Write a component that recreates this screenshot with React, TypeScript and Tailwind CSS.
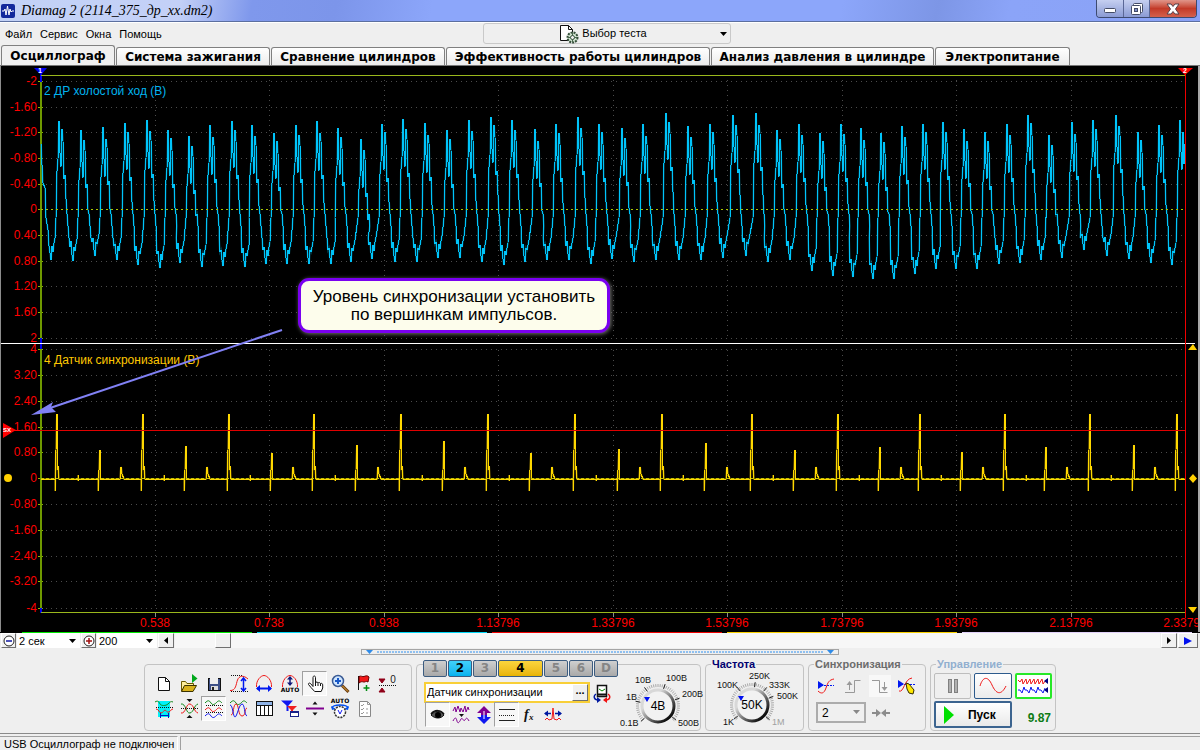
import React, { useState } from 'react';

const menuItems = ['Файл', 'Сервис', 'Окна', 'Помощь'];

const tabs = [
  { label: 'Осциллограф', width: 'w-[114px]' },
  { label: 'Система зажигания', width: 'w-[154px]' },
  { label: 'Сравнение цилиндров', width: 'w-[174px]' },
  { label: 'Эффективность работы цилиндров', width: 'w-[264px]' },
  { label: 'Анализ давления в цилиндре', width: 'w-[223px]' },
  { label: 'Электропитание', width: 'w-[135px]' },
];

const channels = [
  { label: '1', style: 'w-6 bg-linear-to-b from-[#cfcfcf] to-[#a9a9a9] text-[#858585]' },
  { label: '2', style: 'w-6 bg-linear-to-b from-[#3fd0fb] to-[#00b2ee] text-black' },
  { label: '3', style: 'w-6 bg-linear-to-b from-[#cfcfcf] to-[#a9a9a9] text-[#858585]' },
  { label: '4', style: 'w-[45px] bg-linear-to-b from-[#fbd53c] to-[#e9b400] text-black' },
  { label: '5', style: 'w-6 bg-linear-to-b from-[#cfcfcf] to-[#a9a9a9] text-[#858585]' },
  { label: '6', style: 'w-6 bg-linear-to-b from-[#cfcfcf] to-[#a9a9a9] text-[#858585]' },
  { label: 'D', style: 'w-6 bg-linear-to-b from-[#cfcfcf] to-[#a9a9a9] text-[#858585]' },
];

/* ---------- scope data ---------- */

const gridX = [155, 269, 384, 498, 613, 727, 842, 956, 1071, 1185];
const timeLabels = ['0.538', '0.738', '0.938', '1.13796', '1.33796', '1.53796', '1.73796', '1.93796', '2.13796', '2.33796'];

const topScale: [number, string][] = [
  [81, '-2'], [107, '-1.60'], [132, '-1.20'], [158, '-0.80'], [184, '-0.40'], [209, '0'],
  [235, '0.40'], [261, '0.80'], [286, '1.20'], [312, '1.60'], [338, '2'],
];
const bottomScale: [number, string][] = [
  [349, '4'], [375, '3.20'], [401, '2.40'], [427, '1.60'], [452, '0.80'], [478, '0'],
  [504, '-0.80'], [530, '-1.60'], [556, '-2.40'], [581, '-3.20'], [608, '-4'],
];

// trough x, trough y, peak x, peak y
const pulses = [
  [51, 260, 59, 121], [73, 261, 81, 130], [95, 256, 103, 127], [117, 260, 125, 123], [138, 265, 147, 120],
  [160, 268, 168, 130], [180, 263, 189, 136], [202, 267, 210, 125], [223, 266, 232, 121], [245, 267, 252, 125],
  [266, 264, 274, 133], [287, 264, 296, 125], [309, 264, 317, 121], [331, 264, 338, 128], [351, 262, 361, 139],
  [372, 259, 382, 124], [395, 262, 403, 119], [417, 262, 425, 123], [438, 258, 447, 130], [460, 258, 469, 120],
  [482, 262, 491, 117], [504, 265, 512, 120], [525, 262, 535, 129], [547, 260, 556, 124], [569, 260, 578, 117],
  [591, 264, 599, 124], [612, 259, 622, 128], [634, 262, 643, 124], [656, 260, 666, 113], [679, 260, 688, 126],
  [701, 260, 710, 124], [723, 258, 733, 115], [746, 256, 756, 113], [768, 262, 777, 130], [790, 260, 799, 124],
  [812, 271, 820, 133], [833, 276, 841, 124], [853, 277, 861, 128], [873, 279, 881, 133], [894, 279, 902, 126],
  [915, 274, 923, 124], [936, 269, 943, 122], [956, 269, 964, 129], [977, 269, 985, 132], [999, 264, 1007, 124],
  [1020, 263, 1028, 115], [1041, 260, 1049, 135], [1062, 258, 1072, 122], [1084, 250, 1093, 120],
  [1107, 256, 1116, 115], [1129, 259, 1138, 132], [1151, 263, 1159, 125], [1172, 265, 1180, 120],
];

const tallSpikes = [57, 143, 229, 314, 401, 488, 575, 662, 752, 838, 920, 1005, 1090, 1177];
const midSpikes = [
  [100, 450], [186, 446], [272, 453], [357, 445], [444, 441], [531, 453], [619, 449],
  [706, 443], [795, 450], [880, 447], [962, 452], [1046, 447], [1134, 445],
];

function buildKnockPath() {
  let d = 'M41 144L42 165L43 183L45 188L46 218L48 230L49 246';
  pulses.forEach(([tx, ty, px, py], i) => {
    const j = (i * 7) % 5;
    const next = pulses[i + 1];
    d += `L${tx} ${ty}L${tx + 1} ${ty - 14}L${tx + 2} ${ty - 8 - j}L${tx + 3} ${ty - 17}L${tx + 4} ${ty - 22}L${px - 3} 218`;
    d += `L${px - 2} ${py + 50}L${px - 1} ${py + 38}L${px} ${py}L${px + 1} ${py + 32}L${px + 2} ${py + 46 + j}L${px + 3} ${py + 8 + j}`;
    if (!next) {
      d += `L${px + 4} ${py + 44}L${px + 5} ${py + 24}`;
      return;
    }
    d += `L${px + 4} ${py + 20}L${px + 5} ${py + 58}L${px + 6} ${py + 54}L${px + 7} ${py + 78 + j}L${px + 8} 214L${px + 9} 226`;
    d += `L${next[0] - 4} 238L${next[0] - 3} ${next[1] - 14}L${next[0] - 2} ${next[1] - 20 + j}L${next[0] - 1} ${next[1] - 6}`;
  });
  return d;
}

function buildSyncPath() {
  const spikes = [
    ...tallSpikes.map(x => ({ x, d: `L${x - 2} 479V491L${x - 1} 450L${x} 414V470L${x + 1} 466L${x + 2} 479` })),
    ...tallSpikes.map(x => ({ x: x + 21, d: `L${x + 21} 479V475V481V479` })),
    ...midSpikes.map(([x, y]) => ({ x, d: `L${x - 2} 479V491L${x - 1} 470L${x} ${y}V479` })),
    ...midSpikes.map(([x]) => ({ x: x + 21, d: `L${x + 20} 479L${x + 21} 467L${x + 22} 474L${x + 24} 479` })),
  ].sort((a, b) => a.x - b.x);
  return 'M41 479' + spikes.filter(s => s.x < 1184).map(s => s.d).join('') + 'L1185 479';
}

const knockPath = buildKnockPath();
const syncPath = buildSyncPath();

function Scope() {
  return (
    <svg viewBox="0 66 1200 566" className="block w-full h-auto font-['Liberation_Sans',Arial,sans-serif]">
      <rect x="0" y="66" width="1200" height="566" fill="#000" />
      <g shapeRendering="crispEdges">
        {[...topScale, ...bottomScale].map(([y, label]) => (
          <g key={`${y}${label}`}>
            <path d={`M46 ${y + 0.5}H1182`} stroke="#4b4b4b" strokeDasharray="1 4" />
            <path d={`M38 ${y + 0.5}h5`} stroke="#8db600" />
          </g>
        ))}
        {gridX.slice(0, 9).map(x => (
          <g key={x}>
            <path d={`M${x + 0.5} 80V338M${x + 0.5} 350V608`} stroke="#4b4b4b" strokeDasharray="1 4" />
            <path d={`M${x + 0.5} 613v4`} stroke="#8a8a8a" />
          </g>
        ))}
        <path d="M41 75V612" stroke="#6f9a00" strokeWidth="2" />
        <path d="M41 70V82M41 338V349M41 608V613" stroke="#0000f0" strokeWidth="2" />
        <path d="M41 75.5H1186M41 612.5H1186" stroke="#9ab81c" />
      </g>
      <path d={knockPath} fill="none" stroke="#006f8c" strokeWidth="2" strokeOpacity="0.5" />
      <path d={knockPath} fill="none" stroke="#00c4fa" strokeWidth="1" shapeRendering="crispEdges" />
      <path d="M41 209.5H1185" stroke="#a9c500" strokeDasharray="2 3" shapeRendering="crispEdges" />
      <path d={syncPath} fill="none" stroke="#a88a00" strokeWidth="2" strokeOpacity="0.6" />
      <path d={syncPath} fill="none" stroke="#ffd800" strokeWidth="1" shapeRendering="crispEdges" />
      <path d="M41 478.5H1185" stroke="#c4c400" strokeDasharray="3 2" shapeRendering="crispEdges" />
      <path d="M14 430.5H1185" stroke="#e00000" shapeRendering="crispEdges" />
      <path d="M0 343.5H1195" stroke="#fff" shapeRendering="crispEdges" />
      <rect x="1185" y="70" width="1" height="548" fill="#f00000" />

      <g fill="#f00" fontSize="12" textAnchor="end">
        {topScale.map(([y, label]) => <text key={label} x="37" y={y + 4}>{label}</text>)}
        {bottomScale.map(([y, label]) => <text key={label} x="37" y={y + 4}>{label}</text>)}
      </g>
      <g fill="#f00" fontSize="12" textAnchor="middle">
        {timeLabels.map((label, i) => <text key={label} x={gridX[i]} y="627">{label}</text>)}
      </g>
      <text x="44" y="95" fill="#00b4f0" fontSize="12">2 ДР холостой ход (В)</text>
      <text x="44" y="364" fill="#ffc800" fontSize="12">4 Датчик синхронизации (В)</text>

      <path d="M34 68H47L41 75Z" fill="#0000f0" />
      <text x="40" y="73" fill="#fff" fontSize="7" fontWeight="bold" textAnchor="middle">1</text>
      <path d="M1178 68H1193L1185 75Z" fill="#f00" />
      <text x="1185" y="73" fill="#fff" fontSize="7" fontWeight="bold" textAnchor="middle">2</text>
      <path d="M3 423L16 430L3 438Z" fill="#f00" />
      <text x="3" y="432" fill="#fff" fontSize="6" fontWeight="bold">SX</text>
      <circle cx="8" cy="478" r="4" fill="#ffd000" />
      <path d="M1188 350L1193 344L1197 350ZM1188 607H1197L1193 613ZM1193 474L1197 478.5L1193 483L1189 478.5Z" fill="#ffd000" />
      <path d="M282 330L50 408" stroke="#8181f5" strokeWidth="2" />
      <path d="M31 415L53 402L51 407L56 412Z" fill="#8181f5" />

      <rect x="0" y="66" width="1" height="566" fill="#8c8c8c" />
      <rect x="1198" y="66" width="2" height="566" fill="#a8a8a8" />
    </svg>
  );
}

/* ---------- toolbar icons, all drawn on a 24px grid ---------- */

const Icon: React.FC<{ children: React.ReactNode; crisp?: boolean }> = ({ children, crisp }) => (
  <svg viewBox="0 0 24 24" className="w-6 h-6 overflow-visible" fill="none" shapeRendering={crisp ? 'crispEdges' : 'auto'} aria-hidden="true">
    {children}
  </svg>
);

const AutoText = ({ y }: { y: number }) => (
  <text x="12" y={y} fontSize="6" fontWeight="bold" textAnchor="middle" fill="#000" fontFamily="DejaVu Sans, sans-serif">AUTO</text>
);

const icons = {
  newFile: <Icon><path d="M6.5 5.5h7l4 4v9h-11z" fill="#fff" stroke="#111" /><path d="M13.5 5.5v4h4" stroke="#111" /></Icon>,
  open: (
    <Icon>
      <path d="M4.5 19V9.5h4l1.5 2h6.5v3" fill="#ffef9c" stroke="#6b5a00" />
      <path d="M4.5 19.5l3-6h12l-3.5 6z" fill="#d8b21c" stroke="#3c3200" />
      <path d="M15 2l5.5 4.5L15 11z" fill="#00a81c" />
    </Icon>
  ),
  save: (
    <Icon crisp>
      <rect x="6" y="6" width="12" height="12" fill="#3d4f86" stroke="#111" />
      <rect x="8" y="6" width="8" height="6" fill="#eee" />
      <rect x="9" y="14" width="7" height="4" fill="#ddd" />
      <rect x="10" y="15" width="2" height="3" fill="#222" />
    </Icon>
  ),
  fitAmplitude: (
    <Icon>
      <path d="M4 3.5H15M4 19.5H21" stroke="#111" strokeDasharray="1 1" />
      <path d="M3 18.5C9 19 9 12 10.5 8S16 2.5 21 7" stroke="#f01818" />
      <path d="M16.5 7V18M14 9l2.5-3L19 9M14 16l2.5 3L19 16" stroke="#0018f0" strokeWidth="1.5" />
    </Icon>
  ),
  fitPeriod: (
    <Icon>
      <path d="M4.5 15C4 8 9 3.5 12 3.5S20 8 19.5 15" stroke="#f01818" />
      <path d="M5 16.5H19" stroke="#0018f0" strokeWidth="2" />
      <path d="M4 16.5l4-3.5v7zM20 16.5l-4-3.5v7z" fill="#0018f0" />
    </Icon>
  ),
  fitAuto: (
    <Icon>
      <path d="M4.5 15C4 8 9 3.5 12 3.5S20 8 19.5 15" stroke="#f01818" />
      <path d="M12 6V12" stroke="#101878" strokeWidth="1.5" />
      <path d="M12 4l3 3.5H9zM12 14l3-3.5H9z" fill="#101878" />
      <AutoText y={20} />
    </Icon>
  ),
  hand: (
    <Icon>
      <path d="M10 14.5V5.5c0-2 2.5-2 2.5 0V11c.3-1.500 2.5-1.300 2.5.3.3-1.300 2.3-1 2.5.6.5-1 2.200-.6 2.200.9v3.2l-1.500 3.5h-6.500L8 15.5 5.500 12.5c-.6-1.200 1-2 2-1z" fill="#fff" stroke="#111" />
      <path d="M12.5 11v3M15 11.5V14M17.5 12V14" stroke="#111" />
    </Icon>
  ),
  zoomIn: (
    <Icon>
      <path d="M14 13.5L20.5 20" stroke="#6b3c10" strokeWidth="3" />
      <path d="M14.5 14L20 19.5" stroke="#e8b040" />
      <circle cx="10" cy="9" r="5.5" fill="#cfe6ff" stroke="#3a5a94" strokeWidth="1.5" />
      <path d="M10 6V12M7 9H13" stroke="#1858c8" strokeWidth="2" />
    </Icon>
  ),
  flag: (
    <Icon>
      <path d="M5.5 4V18" stroke="#111" />
      <path d="M6 4.5c2-1 3.5.5 5 0s3-1.500 5 .5l-1 5c-2-1.500-3 .5-4.500 0S8 9.500 6 11z" fill="#f01818" stroke="#600" />
      <path d="M13.5 13V19M10.5 16H16.5" stroke="#008c10" strokeWidth="1.5" />
    </Icon>
  ),
  zeroLevel: (
    <Icon>
      <path d="M1 7h6l-3 4zM1 20h6l-3-4z" fill="#900018" stroke="#900018" />
      <path d="M1 13.5H18" stroke="#111" strokeDasharray="1 1" />
      <text x="15" y="11" fontSize="10" textAnchor="middle" fill="#222">0</text>
    </Icon>
  ),
  cursors: (
    <Icon>
      <rect x="6" y="4" width="12" height="16" fill="#00f0f8" />
      <path d="M3 5c3-2 4 0 5 2s6 2 8 0 3-3 5-2" stroke="#108818" />
      <path d="M4 10.5H21" stroke="#111" strokeDasharray="1 1" />
      <path d="M4 12c3 0 3 4 5 4s3-3 4-3 2 3 4 2 2-3 4-3" stroke="#f01818" />
      <path d="M8.5 16v5M16.5 16v5M9 18.5H16" stroke="#0018c0" />
    </Icon>
  ),
  mirror: (
    <Icon>
      <path d="M4 7c5-1 5 10 9 9s4-8 8-9" stroke="#108818" />
      <path d="M4 16c5 1 5-10 9-9s4 8 8 9" stroke="#f01818" />
      <path d="M4 11.5H21" stroke="#111" strokeDasharray="1 1" />
      <path d="M9.5 2h6l-3 3zM9.5 21h6l-3-3z" fill="#111" />
    </Icon>
  ),
  waves: (
    <Icon>
      <path d="M3 6c3-3 4-3 6 0s4 1 6-1 3-1 5 1" stroke="#108818" />
      <path d="M4 8.5H21M4 15.5H21" stroke="#111" strokeDasharray="1 1" />
      <path d="M3 13c3-3 4-3 6 0s4 1 6-1 3-1 5 1" stroke="#f01818" />
      <path d="M3 19c3-3 4-3 6 0s4 1 6-1 3-1 5 1" stroke="#1018f0" />
    </Icon>
  ),
  overlay: (
    <Icon>
      <path d="M3 6c3-3 4-3 6 0s4 1 6-1 3-1 5 1" stroke="#108818" />
      <path d="M4 18C7 18 6 7 9 7s2 12 6 12 2-7 5-8" stroke="#f01818" />
      <path d="M3 8c3 0 3 12 5 12s4-13 7-13 2 11 5 12" stroke="#1018f0" />
    </Icon>
  ),
  table: (
    <Icon crisp>
      <rect x="4" y="4" width="16" height="14" fill="#fff" stroke="#111" />
      <rect x="5" y="5" width="15" height="3" fill="#8fb4e8" />
      <path d="M4 8.5H20M8.5 8V18M12.5 8V18M16.5 8V18" stroke="#111" />
    </Icon>
  ),
  filter: (
    <Icon>
      <path d="M3 3.5h12l-4.500 5V14h-2V8.500z" fill="#1018f0" />
      <path d="M9 9h10l-4 4v5h-2v-5z" fill="#f02020" />
      <rect x="12.5" y="14.5" width="8" height="5" fill="#fff" stroke="#182088" />
      <path d="M13 15.5H20" stroke="#182088" />
    </Icon>
  ),
  split: (
    <Icon>
      <path d="M3 11.5H21" stroke="#800090" strokeWidth="2" />
      <path d="M9.5 7.5h5l-2.500-3zM9.5 15.5h5l-2.500 3z" fill="#111" />
    </Icon>
  ),
  autoKnob: (
    <Icon>
      <AutoText y={6} />
      <path d="M4 11C5 7 19 7 20 11" stroke="#0050f0" strokeWidth="1.5" />
      <path d="M3 9l1 4 4-1zM21 9l-1 4-4-1z" fill="#0050f0" />
      <circle cx="12" cy="15" r="5.5" fill="#fff" stroke="#333" strokeWidth="1.5" strokeDasharray="2 1" />
      <path d="M10 13l2 4 2-4" stroke="#1018f0" />
    </Icon>
  ),
  checklist: (
    <Icon>
      <path d="M6.5 4.5h8l3 3v12h-11z" fill="#fff" stroke="#888" />
      <path d="M14.5 4.5v3h3M8 8l1 1 2-2M8 12l1 1 2-2M8 16l1 1 2-2M13 12h2M13 16h2" stroke="#999" />
    </Icon>
  ),
};

const toolButtons = [
  { label: 'Новый', icon: icons.newFile },
  { label: 'Открыть', icon: icons.open },
  { label: 'Сохранить', icon: icons.save },
  { label: 'Амплитуда', icon: icons.fitAmplitude },
  { label: 'Период', icon: icons.fitPeriod },
  { label: 'Авто', icon: icons.fitAuto },
  { label: 'Перемещение', icon: icons.hand, pressed: true },
  { label: 'Масштаб', icon: icons.zoomIn },
  { label: 'Метка', icon: icons.flag },
  { label: 'Нулевой уровень', icon: icons.zeroLevel },
  { label: 'Курсоры', icon: icons.cursors },
  { label: 'Инверсия', icon: icons.mirror },
  { label: 'Раздельно', icon: icons.waves, pressed: true },
  { label: 'Наложение', icon: icons.overlay },
  { label: 'Таблица', icon: icons.table },
  { label: 'Фильтр', icon: icons.filter },
  { label: 'Разделитель', icon: icons.split },
  { label: 'Автонастройка', icon: icons.autoKnob },
  { label: 'Отчёт', icon: icons.checklist },
];

const channelTools = [
  {
    label: 'Видимость', pressed: true,
    icon: (
      <Icon>
        <path d="M5 12c4-5 10-5 13 0-3 4-9 4-13 0z" fill="#555" stroke="#111" />
        <circle cx="12" cy="12" r="3" fill="#000" />
        <path d="M5 11C9 6 15 7 18 11" stroke="#111" strokeWidth="1.5" />
      </Icon>
    ),
  },
  {
    label: 'Сглаживание',
    icon: (
      <Icon>
        <path d="M4 8l2-4 1 5 2-6 2 6 1-4 2 4 2-6 1 6 2-5 1 3" stroke="#800090" />
        <path d="M10 11h5l-2.500 3z" fill="#111" />
        <path d="M4 18c2-4 3-4 4 0s3 0 4-2 3 3 4 1 2-3 4 1" stroke="#800090" />
      </Icon>
    ),
  },
  {
    label: 'Инвертировать',
    icon: (
      <Icon>
        <path d="M12 3l7 7h-4v2H9v-2H5z" fill="#800090" />
        <path d="M12 21l7-7h-4v-2H9v2H5z" fill="#1018f0" />
        <path d="M12 8v8" stroke="#fff" />
      </Icon>
    ),
  },
  {
    label: 'Уровни', pressed: true,
    icon: <Icon><path d="M4 6.5H20M4 17.5H20" stroke="#222" /><path d="M4 12.5H20" stroke="#222" strokeDasharray="1 1" /></Icon>,
  },
  {
    label: 'Функция',
    icon: (
      <Icon>
        <text x="6" y="16" fontSize="14" fontWeight="bold" fontStyle="italic" fill="#111" fontFamily="Liberation Serif, serif">f</text>
        <text x="11" y="17" fontSize="9" fontWeight="bold" fontStyle="italic" fill="#111" fontFamily="Liberation Serif, serif">x</text>
      </Icon>
    ),
  },
  {
    label: 'Импульс',
    icon: (
      <Icon>
        <path d="M4 17l2-2 2 2 3-1 1-11 1 11 3 1 2-2 2 2" stroke="#f01818" />
        <path d="M4 10.5h6M14 10.5h6" stroke="#0018a0" strokeWidth="1.5" />
        <path d="M3 10.5l4-3v6zM21 10.5l-4-3v6z" fill="#0018a0" />
      </Icon>
    ),
  },
];

const syncTools = [
  {
    label: 'Уровень синхронизации',
    icon: (
      <Icon>
        <path d="M4 7v8l6-4z" fill="#0018f0" />
        <path d="M4 11.5H20" stroke="#0018f0" strokeDasharray="2 1" />
        <path d="M4 17c3 3 6 3 8-3s3-8 8-9" stroke="#f01818" />
      </Icon>
    ),
  },
  {
    label: 'По фронту',
    icon: <Icon><path d="M4 18.5h9.5v-12h6" stroke="#999" /><path d="M8.5 8v8" stroke="#999" /><path d="M5.5 11l3-4 3 4z" fill="#999" /></Icon>,
  },
  {
    label: 'По спаду', selected: true,
    icon: <Icon><path d="M4 6.5h7.5v12h8" stroke="#999" /><path d="M16.5 8v8" stroke="#999" /><path d="M13.5 13l3 4 3-4z" fill="#999" /></Icon>,
  },
  {
    label: 'Выбор уровня',
    icon: (
      <Icon>
        <path d="M3 6v8l6-4z" fill="#0018f0" />
        <path d="M3 10.5H21" stroke="#0018f0" strokeDasharray="2 1" />
        <path d="M4 17c5 2 5-12 13-13" stroke="#f01818" />
        <path d="M11 9l3 1 5 6-1 4-4-1-2-4z" fill="#ffe800" stroke="#332c00" />
      </Icon>
    ),
  },
];

function ToolButton({ label, icon, pressed }: { label: string; icon: React.ReactNode; pressed?: boolean }) {
  return (
    <button
      aria-label={label}
      className={`w-[25px] h-[25px] flex items-center justify-center border ${pressed ? 'bg-[#f7f7f7] border-t-[#a0a0a0] border-l-[#a0a0a0] border-b-white border-r-white' : 'border-transparent'}`}
    >
      <span className="shrink-0">{icon}</span>
    </button>
  );
}

interface DialProps {
  viewBox: string;
  className: string;
  cx: number;
  cy: number;
  r: number;
  value: string;
  marks: { x: number; y: number; text: string; dim?: boolean; angle: number }[];
}

function Dial({ viewBox, className, cx, cy, r, value, marks }: DialProps) {
  const tick = (deg: number, from: number, to: number) => {
    const a = (deg * Math.PI) / 180;
    return `M${cx + Math.sin(a) * from} ${cy - Math.cos(a) * from}L${cx + Math.sin(a) * to} ${cy - Math.cos(a) * to}`;
  };
  const minor = Array.from({ length: 45 }, (_, i) => -132 + i * 6);
  return (
    <svg viewBox={viewBox} className={className} fontFamily="Liberation Sans, Arial, sans-serif">
      <defs>
        <linearGradient id={`rim${value}`} x1="0" y1="0" x2="1" y2="1">
          <stop offset="0.3" stopColor="#d8d8d8" />
          <stop offset="0.6" stopColor="#666" />
          <stop offset="0.9" stopColor="#000" />
        </linearGradient>
      </defs>
      <path d={minor.map(a => tick(a, r + 3, r + 6)).join('')} stroke="#a8a8a8" />
      <path d={marks.map(m => tick(m.angle, r + 2, r + 7)).join('')} stroke="#222" />
      <circle cx={cx} cy={cy} r={r} fill="#f2f2f2" stroke={`url(#rim${value})`} strokeWidth="3" />
      <path d={`M${cx - r + 2} ${cy - 9}h6l-3 5z`} fill="#0010f0" />
      <text x={cx} y={cy + 4} fontSize="12" textAnchor="middle" fill="#000">{value}</text>
      {marks.map(m => (
        <text key={m.text} x={m.x} y={m.y} fontSize="9" fill={m.dim ? '#a0a0a0' : '#111'}>{m.text}</text>
      ))}
    </svg>
  );
}

const Caret = ({ className }: { className: string }) => (
  <svg viewBox="0 0 7 4" className={`w-[7px] h-1 ${className}`} aria-hidden="true"><path d="M0 0h7L3.5 4z" fill="currentColor" /></svg>
);

function ScaleSelect({ label, value, className }: { label: string; value: string; className: string }) {
  return (
    <label className={`relative h-full bg-white ${className}`}>
      <select aria-label={label} className="block w-full h-full appearance-none pl-[2px] bg-white leading-[14px]">
        <option>{value}</option>
      </select>
      <Caret className="absolute right-1 top-[6px] pointer-events-none" />
    </label>
  );
}

const smallButton = 'h-full flex items-center justify-center bg-[#f0f0f0] border border-t-white border-l-white border-b-[#707070] border-r-[#707070]';
const group = 'border border-[#c3c3c3] rounded-[4px] min-w-0';
const groupLegend = 'ml-[5px] px-px h-[13px] leading-[13px] font-bold text-[11px]';

const App: React.FC = () => {
  const [activeTab, setActiveTab] = useState(0);

  return (
    <div className="w-full min-h-screen flex flex-col bg-[#efefef] text-[11px] text-black font-['Liberation_Sans',Tahoma,sans-serif]">
      {/* title bar */}
      <header className="h-[22px] shrink-0 flex items-center pl-px pr-[3px] border-b border-[#5c6f9f] bg-[linear-gradient(100deg,#c3d2f6_0%,#c3d0f7_15%,#7f98ec_21%,#7c95ea_28%,#8ca6fa_36%,#8ca6fa_70%,#7d96e6_78%,#8ba4f8_84%,#8aa2f6_100%)]">
        <svg viewBox="0 0 14 14" className="w-[14px] h-[14px] mr-[6px]" aria-hidden="true">
          <rect width="14" height="14" rx="2" fill="#12289c" />
          <path d="M1 7h2l1-2 1 6 1.5-9 1.5 9 1-6 1 3 1-1h2" fill="none" stroke="#fff" />
        </svg>
        <h1 className="grow text-[14px] leading-5 italic font-['Liberation_Serif',serif]">Diamag 2 (2114_375_др_хх.dm2)</h1>
        <div className="self-start flex h-[18px] border border-t-0 border-[#3d4a70] rounded-b-[4px] overflow-hidden">
          <button aria-label="Свернуть" className="w-[27px] flex items-center justify-center border-r border-[#5a6796] bg-linear-to-b from-[#c5cff0] to-[#8b9bd4]">
            <svg viewBox="0 0 12 5" className="w-3 h-[5px] mt-1"><rect x="0.5" y="0.5" width="11" height="4" rx="1" fill="#fff" stroke="#444c66" /></svg>
          </button>
          <button aria-label="Развернуть" className="w-[26px] flex items-center justify-center border-r border-[#5a6796] bg-linear-to-b from-[#c5cff0] to-[#8b9bd4]">
            <svg viewBox="0 0 14 14" className="w-[14px] h-[14px]" fill="#fff" stroke="#444c66">
              <rect x="3.5" y="1.5" width="9" height="9" rx="1" />
              <rect x="1.5" y="3.5" width="9" height="9" rx="1" />
              <rect x="4.5" y="6.5" width="3" height="3" fill="#7f8fca" />
            </svg>
          </button>
          <button aria-label="Закрыть" className="w-[46px] flex items-center justify-center bg-linear-to-b from-[#e0958a] via-[#c33a28] to-[#d4604c]">
            <svg viewBox="0 0 14 12" className="w-[14px] h-3"><path d="M1 1h4l2 2.5L9 1h4L9.5 6 13 11H9L7 8.5 5 11H1l3.5-5z" fill="#fff" stroke="#56404a" /></svg>
          </button>
        </div>
      </header>

      {/* menu */}
      <div className="h-[23px] shrink-0 grid grid-cols-[1fr_248px_469px] border-t border-white">
        <nav className="flex items-center gap-2 pl-[5px]">
          {menuItems.map(item => <button key={item}>{item}</button>)}
        </nav>
        <button className="relative h-[21px] flex items-center justify-center gap-[3px] pr-2 border border-[#c9c9c9] rounded-[3px]">
          <svg viewBox="0 0 20 20" className="w-5 h-5" fill="none" aria-hidden="true">
            <path d="M1.5 1.5h8l4 4v11h-12z" fill="#fff" stroke="#111" />
            <path d="M9.5 1.5v4h4" stroke="#111" />
            <circle cx="13.5" cy="13.5" r="5" fill="#cfe3cf" stroke="#35503a" strokeWidth="2" strokeDasharray="2 1" />
            <path d="M13.5 9v9M9 13.5h9" stroke="#48654c" />
            <circle cx="13.5" cy="13.5" r="2" fill="#eee" stroke="#35503a" />
          </svg>
          Выбор теста
          <Caret className="absolute right-[3px] top-2" />
        </button>
      </div>

      {/* tabs */}
      <div role="tablist" className="h-[21px] shrink-0 flex items-end gap-px pl-px border-b border-[#777] font-bold text-[12px] font-['DejaVu_Sans',Verdana,sans-serif]">
        {tabs.map((tab, i) => (
          <button
            key={tab.label}
            role="tab"
            aria-selected={i === activeTab}
            onClick={() => setActiveTab(i)}
            className={`${tab.width} border border-b-0 border-[#808080] rounded-t-[3px] whitespace-nowrap text-center ${i === activeTab ? 'h-5 bg-[#f0f0f0]' : 'h-[18px] bg-linear-to-b from-white to-[#ececec]'}`}
          >
            {tab.label}
          </button>
        ))}
      </div>

      {/* scope */}
      <main className="relative">
        <Scope />
        <div className="absolute left-[298px] top-[212px] w-[312px] h-[55px] flex items-center justify-center rounded-[11px] border-3 border-[#7a00f0] bg-[#fdfdec] text-center text-[17px] leading-[18px] shadow-[1px_1px_4px_#777]">
          <p>Уровень синхронизации установить<br />по вершинкам импульсов.</p>
        </div>
      </main>

      {/* time scale and scrollbar */}
      <div className="h-px flex bg-black pl-[22px] pr-2 gap-[5px]">
        <span className="flex-1 bg-[#00e800]" />
        <span className="flex-1 bg-[#00d8f8]" />
        <span className="flex-1 bg-[#f00000]" />
        <span className="flex-1 bg-[#f8d000]" />
        <span className="flex-1 bg-[#e0d0f8]" />
      </div>
      <div className="h-[15px] flex pl-px pr-[2px] gap-px">
        <button aria-label="Уменьшить" className={`${smallButton} w-[15px]`}>
          <svg viewBox="0 0 12 12" className="w-3 h-3" fill="#fff" stroke="#222"><circle cx="6" cy="6" r="5" /><path d="M3 6h6" stroke="#1018a0" strokeWidth="1.5" /></svg>
        </button>
        <ScaleSelect label="Развёртка" value="2 сек" className="w-[63px]" />
        <button aria-label="Увеличить" className={`${smallButton} w-[15px]`}>
          <svg viewBox="0 0 12 12" className="w-3 h-3" fill="#fff" stroke="#222"><circle cx="6" cy="6" r="5" /><path d="M3 6h6M6 3v6" stroke="#a01010" strokeWidth="1.5" /></svg>
        </button>
        <ScaleSelect label="Масштаб" value="200" className="w-[60px]" />
        <button aria-label="Назад" className={`${smallButton} w-4`}>
          <svg viewBox="0 0 4 7" className="w-1 h-[7px]"><path d="M4 0v7L0 3.5z" /></svg>
        </button>
        <div className="grow pl-[40px] bg-[#f7f7f7]">
          <div className={`${smallButton} w-4`} />
        </div>
        <button aria-label="Вперёд" className={`${smallButton} w-4`}>
          <svg viewBox="0 0 4 7" className="w-1 h-[7px]"><path d="M0 0v7l4-3.5z" /></svg>
        </button>
        <button aria-label="В конец" className={`${smallButton} w-5`}>
          <svg viewBox="0 0 8 8" className="w-2 h-2"><path d="M0 0v8l8-4z" fill="#0010f0" /></svg>
        </button>
      </div>

      {/* splitter */}
      <div className="mx-auto mt-px w-[478px] h-[6px] flex items-center justify-between px-1 border border-[#a5a5a5] text-[#2f8be8]">
        <Caret className="" />
        <span className="grow h-[2px] mx-1 bg-[repeating-linear-gradient(90deg,#8fc0f0_0_2px,transparent_2px_3px)]" />
        <Caret className="" />
      </div>

      {/* control panels */}
      <section className="flex justify-center items-end gap-1 pt-[3px] pb-[2px]">
        <div className={`${group} w-[268px] h-[67px] pl-[6px] pt-[6px]`}>
          <div className="grid grid-cols-10 w-[252px]">
            {toolButtons.map(b => <ToolButton key={b.label} {...b} />)}
          </div>
        </div>

        <div className={`${group} w-[285px] h-[67px] flex justify-between`}>
          <div className="pl-[6px]">
            <div className="-mt-[5px] flex gap-px w-max bg-[#efefef]">
              {channels.map(c => (
                <button key={c.label} className={`${c.style} h-[17px] leading-[15px] border border-[#3c5c80] rounded-[2px] font-bold text-[12px] font-['DejaVu_Sans',Verdana,sans-serif]`}>{c.label}</button>
              ))}
            </div>
            <div className="flex items-center gap-[3px] pl-px pt-[5px]">
              <div className="flex w-[166px] h-[21px] border-2 border-[#f8cf38] bg-white">
                <input aria-label="Название канала" defaultValue="Датчик синхронизации" className="grow min-w-0 pl-px outline-none bg-transparent" />
                <button aria-label="Выбрать датчик" className={`${smallButton} w-4 font-bold leading-none pb-1`}>...</button>
              </div>
              <button aria-label="Прибор">
                <svg viewBox="0 0 18 20" className="w-[18px] h-5" fill="none">
                  <rect x="4.5" y="2.5" width="9" height="11" fill="#fff" stroke="#111" strokeWidth="1.5" />
                  <path d="M6 6l3 2 3-2" stroke="#080" />
                  <path d="M5 11.5h8" stroke="#111" strokeWidth="2" />
                  <path d="M3 11C0 13 1 17 5 17" stroke="#0018a0" strokeWidth="1.5" /><path d="M4 14l4 3-4 3z" fill="#0018a0" />
                  <path d="M15 11c3 2 2 6-2 6" stroke="#f01010" strokeWidth="1.5" /><path d="M14 14l-4 3 4 3z" fill="#f01010" />
                </svg>
              </button>
            </div>
            <div className="flex w-max pl-[3px]">
              {channelTools.map(b => <span key={b.label} className="w-[23px] h-[23px] flex items-center justify-center"><ToolButton {...b} /></span>)}
            </div>
          </div>
          <Dial
            viewBox="0 0 86 62" className="w-[86px] h-[62px] shrink-0 mt-[3px]" cx={40} cy={38} r={16} value="4В"
            marks={[
              { x: 2, y: 58, text: '0.1В', angle: -132 }, { x: 8, y: 32, text: '1В', angle: -78 }, { x: 17, y: 15, text: '10В', angle: -36 },
              { x: 48, y: 13, text: '100В', angle: 18 }, { x: 64, y: 29, text: '200В', angle: 70 }, { x: 60, y: 58, text: '500В', angle: 128 },
            ]}
          />
        </div>

        <fieldset className={`${group} w-[99px] h-[73px]`}>
          <legend className={`${groupLegend} text-[#000070]`}>Частота</legend>
          <Dial
            viewBox="0 0 96 58" className="w-[96px] h-[58px]" cx={46} cy={34} r={16} value="50K"
            marks={[
              { x: 17, y: 54, text: '1K', angle: -128 }, { x: 11, y: 17, text: '100K', angle: -40 }, { x: 43, y: 8, text: '250K', angle: 8 },
              { x: 63, y: 17, text: '333K', angle: 40 }, { x: 71, y: 28, text: '500K', angle: 68 }, { x: 66, y: 54, text: '1M', dim: true, angle: 130 },
            ]}
          />
        </fieldset>

        <fieldset className={`${group} w-[118px] h-[73px]`}>
          <legend className={`${groupLegend} text-[#6c6c6c]`}>Синхронизация</legend>
          <div className="flex gap-[5px] pl-[6px] pt-1">
            {syncTools.map(b => (
              <button key={b.label} aria-label={b.label} className={`w-[22px] h-[22px] flex items-center justify-center ${b.selected ? 'bg-[#f8f8f8]' : ''}`}>
                <span className="shrink-0">{b.icon}</span>
              </button>
            ))}
          </div>
          <div className="flex items-center gap-[6px] pl-[7px] pt-[5px]">
            <label className="relative w-[50px] h-[21px]">
              <select aria-label="Канал синхронизации" className="block w-full h-full appearance-none border-2 border-[#acacac] bg-[#f0f0f0] pl-1 text-[12px]">
                <option>2</option>
              </select>
              <Caret className="absolute right-[6px] top-2 text-[#888] pointer-events-none" />
            </label>
            <svg viewBox="0 0 18 8" className="w-[18px] h-2" aria-hidden="true"><path d="M0 3h4V0l5 4-5 4V5H0zM18 3h-4V0L9 4l5 4V5h4z" fill="#8c8c8c" /></svg>
          </div>
        </fieldset>

        <fieldset className={`${group} w-[126px] h-[73px]`}>
          <legend className={`${groupLegend} text-[#92afd0]`}>Управление</legend>
          <div className="grid grid-cols-3 gap-x-[3px] gap-y-[2px] px-[3px] pt-[2px]">
            <button aria-label="Пауза" className="h-[26px] flex items-center justify-center border border-[#bdbdbd] rounded-[2px]">
              <svg viewBox="0 0 12 16" className="w-3 h-4" fill="#b0b0b0" stroke="#808080"><rect x="1.5" y="1.5" width="3" height="13" /><rect x="7.5" y="1.5" width="3" height="13" /></svg>
            </button>
            <button aria-label="Однократно" className="h-[26px] flex items-center justify-center border border-[#2c5a8c] rounded-[2px] bg-linear-to-b from-white to-[#ebebeb]">
              <svg viewBox="0 0 28 20" className="w-7 h-5" fill="none"><path d="M1 10C4 0 9 0 13 9s9 11 14 1" stroke="#f01818" /></svg>
            </button>
            <button aria-label="Непрерывно" className="h-[26px] flex items-center justify-center border-2 border-[#28e828] rounded-[2px] bg-white">
              <svg viewBox="0 0 32 20" className="w-8 h-5" fill="none">
                <path d="M1 4l2 2 2-3 1 5 3-5 1 5 3-5 1 5 3-5 1 5 3-5 1 5 3-5 1 5 3-4" stroke="#f01818" />
                <path d="M1 14h2l2 3 2-6 1 3h2l2 3 2-6 1 3h2l2 3 2-6 1 3h2l2 3 2-5" stroke="#1018f0" />
                <path d="M31 2v6l-4-3zM31 11v6l-4-3z" fill="#000080" />
              </svg>
            </button>
            <button className="col-span-2 h-[27px] flex items-center pl-2 border-2 border-[#3c648f] rounded-[2px] bg-linear-to-b from-white to-[#e9e9e9] font-bold text-[12px]">
              <svg viewBox="0 0 10 18" className="w-[10px] h-[18px]"><path d="M0 0v18l10-9z" fill="#00e000" /></svg>
              <span className="grow text-center">Пуск</span>
            </button>
            <span className="self-end pb-px pr-px text-right font-bold text-[12px] text-[#0c7c14]">9.87</span>
          </div>
        </fieldset>
      </section>

      {/* status bar */}
      <footer className="h-[18px] flex items-end gap-[2px] border-t border-[#8a8a8a] bg-[#efefef]">
        <span className="w-[178px] h-[15px] pl-1 leading-[14px] border-t border-r border-t-[#a0a0a0] border-r-white whitespace-nowrap">USB Осциллограф не подключен</span>
        <span className="grow h-[15px] border-t border-l border-[#a0a0a0]" />
      </footer>
      <div className="h-px bg-[#4f66a8]" />
    </div>
  );
};

export default App;
